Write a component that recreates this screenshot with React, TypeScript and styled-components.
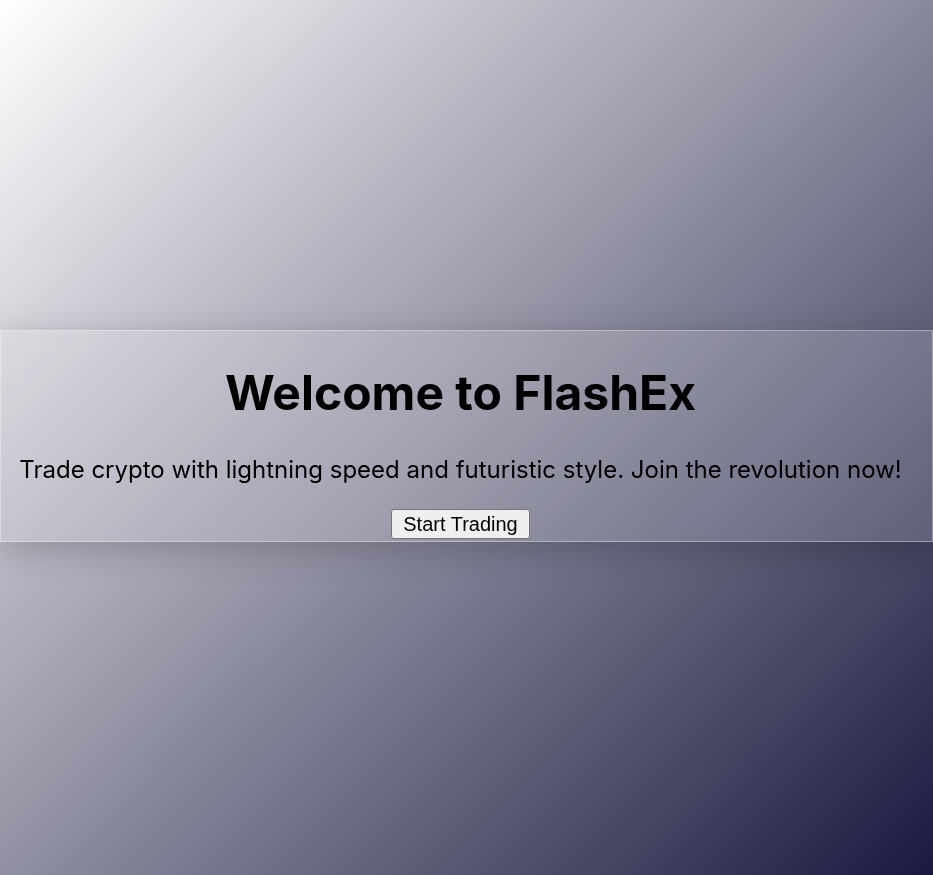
import React from 'react'
import styled, { createGlobalStyle } from 'styled-components'

const GlobalStyle = createGlobalStyle`
  html, body {
    margin: 0;
    padding: 0;
  }
  body {
    font-family: 'Inter', 'Noto Sans', sans-serif;
    color: #000;
  }
`

const Page = styled.div`
  box-sizing: border-box;
  min-height: 100vh;
  padding-bottom: 4px;
  display: flex;
  flex-direction: column;
  justify-content: center;
  background: linear-gradient(135deg, #ffffff 0%, #1a1a40 100%);
`

const Hero = styled.section`
  box-sizing: border-box;
  width: 100%;
  text-align: center;
  padding: 0 12px 2px 0;
  background: rgba(255, 255, 255, 0.15);
  border: 1px solid rgba(255, 255, 255, 0.35);
  box-shadow: 0 8px 32px rgba(0, 0, 0, 0.2);
  backdrop-filter: blur(10px);
`

const Title = styled.h1`
  font-size: 48px;
  font-weight: 700;
  margin: 32px 0;
`

const Tagline = styled.p`
  font-size: 24px;
  margin: 33px 0 25px;
`

const StartButton = styled.button`
  font-family: 'Liberation Sans', Arial, sans-serif;
  font-size: 20px;
  padding: 3px 11px 2px;
  background: #efefef;
  color: #000;
  border: 1px solid #767676;
  border-radius: 3px;
  cursor: pointer;
`

const App: React.FC = () => {
  return (
    <>
      <GlobalStyle />
      <Page>
        <Hero>
          <Title>Welcome to FlashEx</Title>
          <Tagline>Trade crypto with lightning speed and futuristic style. Join the revolution now!</Tagline>
          <StartButton>Start Trading</StartButton>
        </Hero>
      </Page>
    </>
  )
}

export default App
